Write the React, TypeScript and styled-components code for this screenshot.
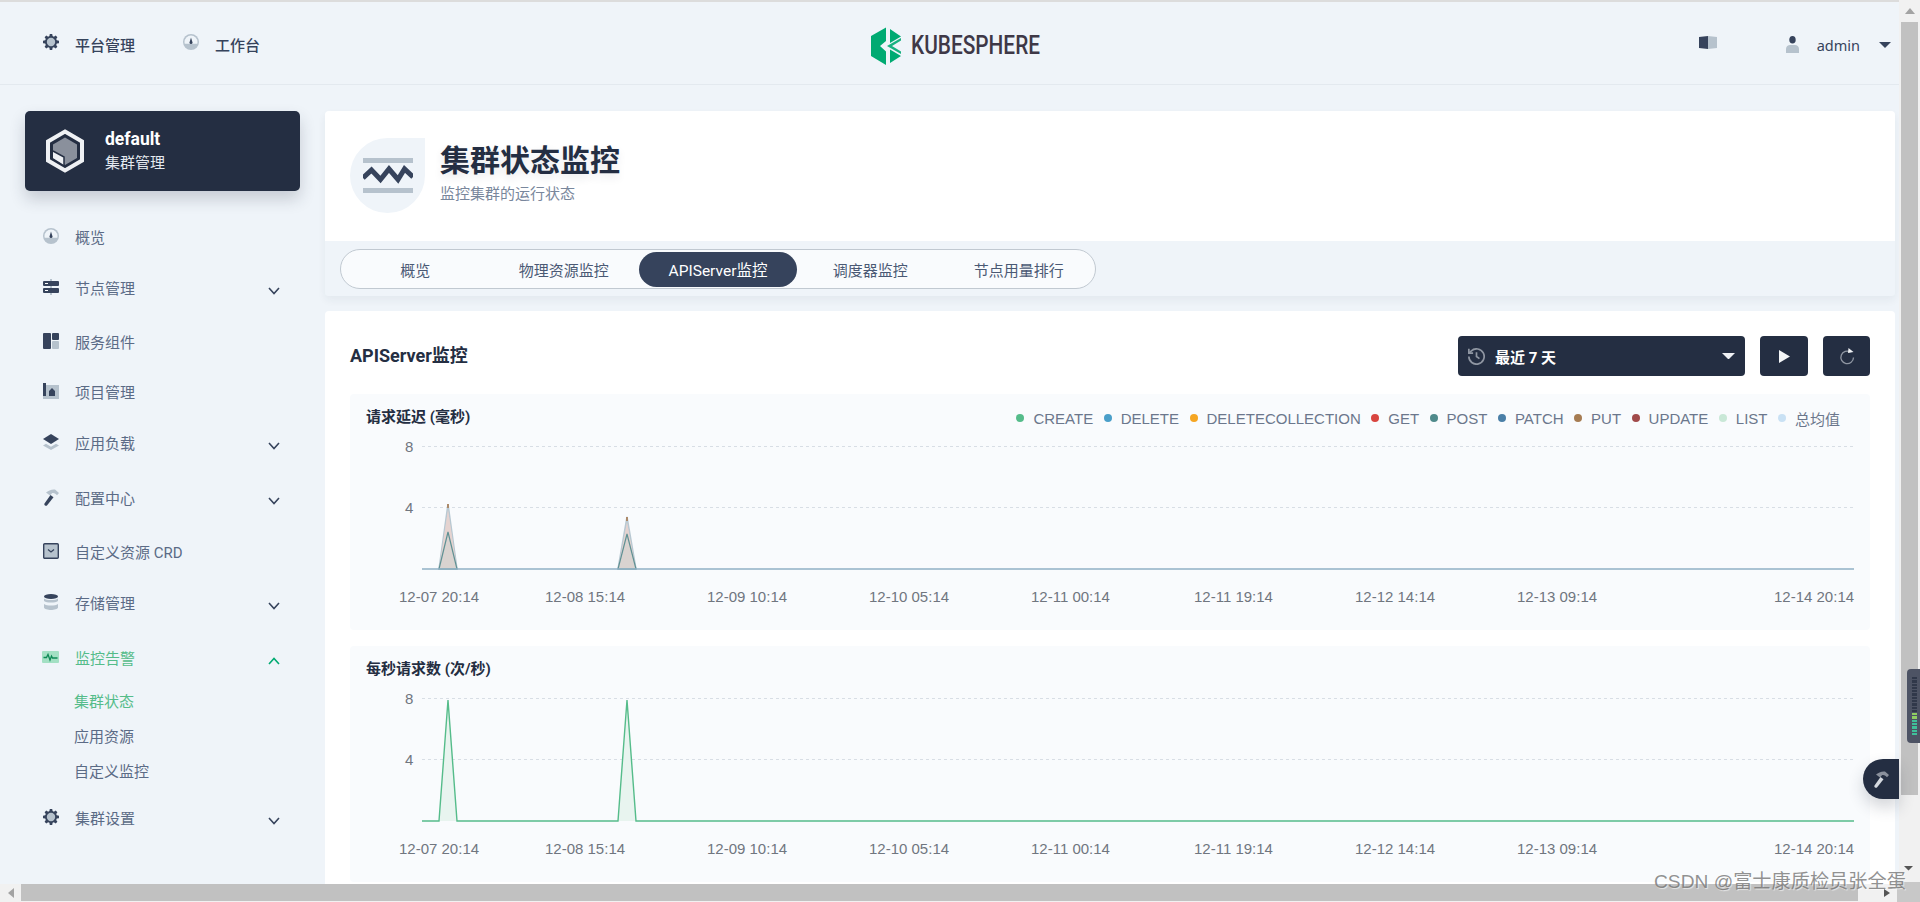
import React from "react";
import styled, { createGlobalStyle } from "styled-components";

const Global = createGlobalStyle`
  html, body { margin: 0; padding: 0; height: 100%; overflow: hidden; background: #eff4f9; }
  body { font-family: Roboto, "Noto Sans CJK SC", "Liberation Sans", sans-serif; color: #36435c; }
  * { box-sizing: border-box; }
`;

const Viewport = styled.div`
  width: 1920px;
  height: 902px;
  display: grid;
  grid-template-columns: 1899px 21px;
  grid-template-rows: 884px 18px;
  overflow: hidden;
  position: relative;
  background: #eff4f9;
`;
const Page = styled.div`
  grid-column: 1;
  grid-row: 1;
  overflow: hidden;
  border-top: 2px solid #dcdcdc;
  display: flex;
  flex-direction: column;
`;
const TopBar = styled.header`
  height: 83px;
  flex: none;
  display: flex;
  align-items: center;
  position: relative;
  border-bottom: 1px solid #e3e9ef;
  padding: 3px 8px 0 43px;
`;
const TopLink = styled.div`
  display: flex;
  align-items: center;
  gap: 16px;
  margin-right: 48px;
  font-size: 15px;
  font-weight: 500;
  color: #36435c;
  & svg { position: relative; top: -3px; }
`;
const LogoBox = styled.div`
  position: absolute;
  left: 871px;
  top: 25px;
  line-height: 0;
`;
const TopRight = styled.div`
  margin-left: auto;
  display: flex;
  align-items: center;
`;
const BookSlot = styled.span`
  margin-right: 69px;
  line-height: 0;
  position: relative;
  top: -2px;
`;
const UserName = styled.span`
  font-size: 14.5px;
  color: #36435c;
  margin: 0 19px 0 18px;
  font-family: "Noto Sans", Roboto, sans-serif;
`;
const Body = styled.div`
  flex: 1;
  display: flex;
  min-height: 0;
`;
const Sidebar = styled.aside`
  width: 325px;
  flex: none;
  padding: 26px 25px 0 25px;
`;
const ClusterCard = styled.div`
  height: 80px;
  background: #242e42;
  border-radius: 5px;
  box-shadow: 0 8px 16px rgba(36, 46, 66, 0.2);
  display: flex;
  align-items: center;
  padding-left: 20px;
  gap: 20px;
  margin-bottom: 23px;
  color: #fff;
`;
const ClusterName = styled.div`
  font-size: 17.5px;
  font-weight: 700;
  line-height: 23px;
`;
const ClusterSub = styled.div`
  font-size: 15px;
  line-height: 24px;
  color: #e3e9ef;
`;
const NavItem = styled.div<{ $gap: number; $active?: boolean }>`
  height: 44px;
  margin-top: ${(p) => p.$gap}px;
  display: flex;
  align-items: center;
  padding-left: 18px;
  padding-right: 20px;
  font-size: 15px;
  color: ${(p) => (p.$active ? "#55bc8a" : "#5b6b86")};
  & > svg:first-child { margin-right: 16px; flex: none; }
  & > svg.chev { margin-left: auto; position: relative; top: 4px; }
`;
const SubItem = styled.div<{ $active?: boolean; $gap?: number }>`
  height: 35px;
  margin-top: ${(p) => p.$gap ?? 0}px;
  display: flex;
  align-items: center;
  padding-left: 49px;
  font-size: 15px;
  color: ${(p) => (p.$active ? "#55bc8a" : "#5b6b86")};
`;
const Main = styled.main`
  width: 1570px;
  flex: none;
  padding-top: 26px;
`;
const Banner = styled.section`
  height: 185px;
  border-radius: 4px;
  overflow: hidden;
  box-shadow: 0 4px 8px rgba(36, 46, 66, 0.06);
  margin-bottom: 15px;
`;
const BannerTop = styled.div`
  height: 130px;
  background: #fff;
  display: flex;
  align-items: flex-start;
  padding: 27px 0 0 25px;
  gap: 15px;
`;
const BannerIcon = styled.div`
  width: 75px;
  height: 75px;
  background: #eff4f9;
  border-radius: 50% 0 50% 50%;
  display: flex;
  align-items: center;
  justify-content: center;
`;
const BannerTitle = styled.h1`
  margin: 2px 0 0;
  font-size: 30px;
  line-height: 42px;
  font-weight: 700;
  color: #242e42;
  text-shadow: 0 4px 8px rgba(36, 46, 66, 0.1);
`;
const BannerSub = styled.div`
  font-size: 15px;
  line-height: 20px;
  margin-top: 2px;
  color: #79879c;
`;
const TabStrip = styled.div`
  height: 55px;
  background: #eff4f9;
  padding-top: 8px;
  padding-left: 15px;
`;
const TabPill = styled.div`
  width: 756px;
  height: 40px;
  border: 1px solid #c1c9d1;
  border-radius: 20px;
  background: #f9fbfd;
  display: flex;
  align-items: center;
  padding-left: 1px;
`;
const Tab = styled.div<{ $active?: boolean }>`
  width: ${(p) => (p.$active ? 158 : 148.5)}px;
  height: 35px;
  border-radius: 18px;
  display: flex;
  align-items: center;
  justify-content: center;
  padding-right: ${(p) => (p.$active ? 0 : 2)}px;
  font-size: ${(p) => (p.$active ? 15.5 : 15)}px;
  color: ${(p) => (p.$active ? "#fff" : "#4a5974")};
  background: ${(p) => (p.$active ? "#36435c" : "transparent")};
`;
const Card = styled.section`
  background: #fff;
  border-radius: 4px;
  padding: 25px 25px 0;
  height: 580px;
`;
const CardHead = styled.div`
  display: flex;
  align-items: center;
  height: 40px;
  margin-bottom: 18px;
`;
const CardTitle = styled.h2`
  margin: 0;
  padding-bottom: 4px;
  font-size: 18px;
  font-weight: 700;
  color: #242e42;
  flex: 1;
`;
const DarkSelect = styled.div`
  width: 287px;
  height: 40px;
  background: #242e42;
  border-radius: 4px;
  display: flex;
  align-items: center;
  padding: 0 10px 0 10px;
  color: #fff;
  font-size: 15px;
  font-weight: 700;
  gap: 10px;
  & > svg:last-child { margin-left: auto; }
`;
const DarkButton = styled.div<{ $w: number }>`
  width: ${(p) => p.$w}px;
  height: 40px;
  background: #242e42;
  border-radius: 4px;
  margin-left: 15px;
  display: flex;
  align-items: center;
  justify-content: center;
`;
const Panel = styled.div`
  background: #f9fbfd;
  border-radius: 4px;
  margin-bottom: 16px;
  height: 236px;
`;
const PanelHead = styled.div`
  height: 40px;
  display: flex;
  align-items: center;
  padding: 0 30px 0 16px;
`;
const PanelTitle = styled.div`
  font-size: 15px;
  font-weight: 700;
  color: #242e42;
  flex: 1;
  padding-top: 2px;
`;
const Legend = styled.div`
  display: flex;
  align-items: center;
  gap: 10.5px;
  position: relative;
  top: 4px;
  font-family: "Liberation Sans", "Noto Sans CJK SC", sans-serif;
  font-size: 15px;
  color: #6b778c;
`;
const LegendItem = styled.span<{ $c: string }>`
  display: flex;
  align-items: center;
  gap: 9px;
  &::before {
    content: "";
    width: 8px;
    height: 8px;
    border-radius: 50%;
    background: ${(p) => p.$c};
  }
`;
const ChartSvg = styled.svg`
  display: block;
  & text {
    font-family: "Liberation Sans", sans-serif;
    font-size: 15px;
    fill: #70767f;
  }
`;
const HScrollBar = styled.div`
  grid-column: 1;
  grid-row: 2;
  background: #f1f1f1;
  display: flex;
  align-items: center;
`;
const HArrow = styled.div`
  width: 21px;
  height: 18px;
  display: flex;
  align-items: center;
  justify-content: center;
`;
const HThumb = styled.div`
  width: 1837px;
  height: 17px;
  margin-bottom: 1px;
  background: #c1c1c1;
`;
const VScrollBar = styled.div`
  grid-column: 2;
  grid-row: 1 / span 2;
  background: #f1f1f1;
  display: flex;
  flex-direction: column;
  padding-left: 2px;
`;
const VArrow = styled.div`
  width: 17px;
  height: 22px;
  display: flex;
  align-items: center;
  justify-content: center;
  flex: none;
`;
const VThumb = styled.div`
  width: 17px;
  height: 773px;
  flex: none;
  background: #c1c1c1;
`;
const VCorner = styled.div`
  margin: auto 0 0 -4px;
  width: 23px;
  height: 20px;
  background: #c8c8c8;
`;
const FloatTool = styled.div`
  position: absolute;
  left: 1863px;
  top: 759px;
  width: 36px;
  height: 40px;
  background: #242e42;
  border-radius: 20px 0 0 20px;
  box-shadow: 0 8px 16px rgba(36, 46, 66, 0.2);
  display: flex;
  align-items: center;
  justify-content: center;
`;
const Meter = styled.div`
  position: absolute;
  left: 1907px;
  top: 669px;
  width: 13px;
  height: 74px;
  background: #4d5364;
  border-radius: 4px 0 0 4px;
  padding: 8px 3px 8px 5px;
  display: flex;
  flex-direction: column;
  gap: 1px;
`;
const MeterBar = styled.i<{ $c: string }>`
  display: block;
  flex: 1;
  background: ${(p) => p.$c};
`;
const Watermark = styled.div`
  position: absolute;
  left: 1654px;
  top: 868px;
  white-space: nowrap;
  font-family: "Liberation Sans", "Noto Sans CJK SC", sans-serif;
  font-size: 19.2px;
  line-height: 28px;
  color: rgba(110, 110, 110, 0.75);
  text-shadow: 1px 1px 1px rgba(255, 255, 255, 0.6);
`;
const CornerMark = styled.svg`
  position: absolute;
  left: 1884px;
  top: 866px;
`;
const PulseSvg = styled.svg`
  margin-left: -1px;
`;

const D = "#36435c";
const L = "#b6c2cd";

const Gear = () => (
  <svg width="16" height="16" viewBox="0 0 16 16">
    <path fill={D} d="M6.8 0h2.4l.4 2.1 1.3.6 1.8-1.2 1.7 1.7-1.2 1.8.6 1.3 2.2.5v2.4l-2.2.4-.6 1.3 1.2 1.8-1.7 1.7-1.8-1.2-1.3.6-.4 2.1H6.8l-.4-2.1-1.3-.6-1.8 1.2-1.7-1.7 1.2-1.8-.6-1.3L0 9.2V6.8l2.2-.5.6-1.3L1.6 3.2l1.7-1.7 1.8 1.2 1.3-.6z" />
    <circle cx="8" cy="8" r="4.2" fill={L} />
  </svg>
);
const Dial = () => (
  <svg width="16" height="16" viewBox="0 0 16 16">
    <circle cx="8" cy="8" r="8" fill={L} />
    <path fill="#eff4f9" d="M1.5 8a6.5 6.5 0 0 1 13 0c0 .7-.1 1.2-.3 1.7H1.8C1.6 9.200 1.500 8.700 1.500 8z" />
    <path fill={D} d="M8 3.500l1.500 5a1.500 1.500 0 1 1-3 0z" />
  </svg>
);
const Book = () => (
  <svg width="18" height="13" viewBox="0 0 18 13">
    <path fill={D} d="M0 1l9-1v13l-9-1z" />
    <path fill={L} d="M9 0l9 1v11l-9 1z" />
  </svg>
);
const User = () => (
  <svg width="13" height="17" viewBox="0 0 13 17">
    <ellipse cx="6.500" cy="3.800" rx="3.200" ry="3.800" fill={D} />
    <path fill={L} d="M0 17v-4c0-2.500 2-4 4-4h5c2 0 4 1.500 4 4v4z" />
  </svg>
);
const Caret = ({ c = D, w = 12 }: { c?: string; w?: number }) => (
  <svg width={w} height={w / 2} viewBox="0 0 12 6">
    <path fill={c} d="M0 0h12L6 6z" />
  </svg>
);
const Chevron = ({ up, c = D }: { up?: boolean; c?: string }) => (
  <svg className="chev" width="12" height="8" viewBox="0 0 12 8">
    <path fill="none" stroke={c} strokeWidth="1.600" d={up ? "M1 7l5-5.500L11 7" : "M1 1l5 5.500L11 1"} />
  </svg>
);
const Server = () => (
  <svg width="16" height="16" viewBox="0 0 16 16">
    <path fill={L} d="M7 0h2v16H7z" />
    <rect y="2" width="16" height="5" rx="1" fill={D} />
    <rect y="9" width="16" height="5" rx="1" fill={D} />
    <path fill="#fff" d="M2 4h3v1H2zM2 11h3v1H2z" />
  </svg>
);
const Blocks = () => (
  <svg width="16" height="16" viewBox="0 0 16 16">
    <rect width="8" height="16" rx="1" fill={D} />
    <rect x="9" width="7" height="7" rx="1" fill={D} />
    <rect x="9" y="8" width="7" height="8" rx="1" fill={L} />
  </svg>
);
const Project = () => (
  <svg width="16" height="16" viewBox="0 0 16 16">
    <rect y="2" width="16" height="14" fill={L} />
    <path fill={D} d="M0 0h3v13H0zM6 13V8l3-3 3 3v5z" />
  </svg>
);
const Layers = () => (
  <svg width="16" height="16" viewBox="0 0 16 16">
    <path fill={L} d="M8 16L0 11.500l3-1.700 5 3 5-3 3 1.700z" />
    <path fill={D} d="M8 0l8 5-8 5-8-5z" />
  </svg>
);
const Hammer = ({ a = D, b = L }: { a?: string; b?: string }) => (
  <svg width="16" height="17" viewBox="0 0 16 17">
    <path fill={b} d="M3 3.500C5 1.500 9 0 12 .5L16 4l-2 2.200C12 4.200 10.500 3.600 9 4.200L7 6.500z" />
    <path fill={a} d="M7.500 6l3 2.300-6.300 8c-.6.600-1.500.700-2.200.2-.7-.5-.9-1.300-.5-2z" />
  </svg>
);
const CrdBox = () => (
  <svg width="16" height="16" viewBox="0 0 16 16">
    <rect x=".7" y=".7" width="14.600" height="14.600" rx="1" fill={L} stroke={D} strokeWidth="1.400" />
    <path fill="none" stroke={D} strokeWidth="1.300" d="M5 6.500l3 2.500 3-2.500" />
  </svg>
);
const Disk = () => (
  <svg width="16" height="16" viewBox="-1 0 16 16">
    <ellipse cx="7" cy="2.500" rx="7" ry="2.500" fill={D} />
    <path fill={L} d="M0 4.500c1.500 1.200 4 1.500 7 1.500s5.500-.3 7-1.500V7c-1.500 1.200-4 1.600-7 1.600S1.500 8.200 0 7zM0 10c1.500 1.200 4 1.500 7 1.500s5.500-.3 7-1.500v3.500C14 15 10 16 7 16s-7-1-7-2.500z" />
  </svg>
);
const Pulse = () => (
  <PulseSvg width="17" height="12" viewBox="0 0 17 12">
    <rect width="17" height="12" rx="1" fill="#a3e0c4" />
    <path fill="none" stroke="#0f8a57" strokeWidth="1.300" d="M1.500 6.500h3l1.500-3 2 5.500 1.500-4 1 2h5" />
  </PulseSvg>
);
const HexCube = () => (
  <svg width="40" height="44" viewBox="0 0 40 44">
    <path fill="none" stroke="#eff1f4" strokeWidth="4" d="M20 2.500l17 10v19l-17 10-17-10v-19z" />
    <path fill="#8a909c" d="M20 8.500l12 7v13.500l-12 7-12-7V15.500z" />
    <path fill="#eff1f4" d="M8 22l11 6v8l-11-7z" />
    <path fill="none" stroke="#242e42" strokeWidth="1.500" d="M8 22l11 6v8" />
  </svg>
);
const Logo = () => (
  <svg width="210" height="38" viewBox="0 0 210 38">
    <path fill="#00aa72" d="M15 .5v13.500l-6 5 6 5.500v13.500L0 29V9z" />
    <path fill="#00aa72" d="M19 2l11 7.500-11 6.500zM19 22.500l11 6.500-11 7z" />
    <path fill="#00aa72" d="M16 19l14-8v2.500L21 19l9 5.500v2.500z" opacity=".9" />
    <text x="40" y="27" textLength="129" lengthAdjust="spacingAndGlyphs" fontFamily="Roboto, sans-serif" fontSize="25" fontWeight="500" fill="#3e3847">KUBESPHERE</text>
  </svg>
);
const Zigzag = () => (
  <svg width="50" height="35" viewBox="0 0 50 35">
    <rect width="50" height="5" fill={L} />
    <rect y="30" width="50" height="5" fill={L} />
    <path fill="none" stroke={D} strokeWidth="5" d="M0 20l8.500-8 9 9.500L26 11l9 10.500L41.500 11l8.500 8" />
  </svg>
);
const ClockBack = () => (
  <svg width="17" height="17" viewBox="2 2 20 20" fill="none" stroke="#8f96a2" strokeWidth="2">
    <path d="M3 12a9 9 0 1 0 3-6.700L3 8" />
    <path d="M3 3v5h5" />
    <path d="M12 7v5l3.500 2.500" />
  </svg>
);
const PlayIcon = () => (
  <svg width="11" height="13" viewBox="0 0 11 13"><path fill="#f4f6f8" d="M0 0l11 6.500L0 13z" /></svg>
);
const Refresh = () => (
  <svg width="16" height="17" viewBox="0 0 16 17">
    <path fill="none" stroke="#8f96a2" strokeWidth="1.300" d="M11.500 4A6.300 6.300 0 1 0 14.500 9.500" />
    <path fill="#eff1f4" d="M9.500 0l5 4-5.500 1z" />
  </svg>
);

const labels: [number, string][] = [
  [49, "12-07 20:14"], [195, "12-08 15:14"], [357, "12-09 10:14"], [519, "12-10 05:14"], [681, "12-11 00:14"],
  [844, "12-11 19:14"], [1005, "12-12 14:14"], [1167, "12-13 09:14"], [1424, "12-14 20:14"],
];

const Axis = () => (
  <>
    <line x1="72" x2="1504" y1="6.500" y2="6.500" stroke="#d8dee5" strokeDasharray="3 3" />
    <line x1="72" x2="1504" y1="67.500" y2="67.500" stroke="#d8dee5" strokeDasharray="3 3" />
    <text x="55" y="11.500">8</text>
    <text x="55" y="72.500">4</text>
    {labels.map(([x, t]) => (
      <text key={t} x={x} y="162">{t}</text>
    ))}
  </>
);

const spike = (c: number, top: number) => `${c - 9},129 ${c},${top} ${c + 9},129`;

const LatencyChart = () => (
  <ChartSvg width="1520" height="196" viewBox="0 -6 1520 196">
    <Axis />
    {[[98, 64], [277, 77]].map(([c, top]) => (
      <g key={c}>
        <polygon points={spike(c, top)} fill="#d9d3d0" stroke="#b8c8d2" strokeWidth="1.500" />
        <polygon points={spike(c, top + 6)} fill="#e5d3d0" />
        <polygon points={spike(c, top === 64 ? 92 : 94)} fill="#d9d3d0" stroke="#5f9194" strokeWidth="1.200" />
        <line x1={c} x2={c} y1={top} y2={top + 4} stroke="#a87a50" strokeWidth="1.600" />
      </g>
    ))}
    <line x1="72" x2="1504" y1="129" y2="129" stroke="#8fb0c4" strokeWidth="1.500" />
  </ChartSvg>
);

const RateChart = () => (
  <ChartSvg width="1520" height="196" viewBox="0 -6 1520 196">
    <Axis />
    <polygon points={spike(98, 8)} fill="#e8f4ef" />
    <polygon points={spike(277, 8)} fill="#e8f4ef" />
    <polyline
      points="72,129 89,129 98,8 107,129 268,129 277,8 286,129 1504,129"
      fill="none"
      stroke="#55bc8a"
      strokeWidth="1.400"
    />
  </ChartSvg>
);

const legend: [string, string][] = [
  ["CREATE", "#55bc8a"], ["DELETE", "#4a9fc9"], ["DELETECOLLECTION", "#f5a623"], ["GET", "#d8453f"],
  ["POST", "#4f8a8b"], ["PATCH", "#4a7fa7"], ["PUT", "#a67c52"], ["UPDATE", "#a14a4a"],
  ["LIST", "#c9e8d7"], ["总均值", "#c9e1f4"],
];

export default function App() {
  return (
    <Viewport>
      <Global />
      <Page>
        <TopBar>
          <TopLink><Gear />平台管理</TopLink>
          <TopLink><Dial />工作台</TopLink>
          <LogoBox><Logo /></LogoBox>
          <TopRight>
            <BookSlot><Book /></BookSlot>
            <User />
            <UserName>admin</UserName>
            <Caret />
          </TopRight>
        </TopBar>
        <Body>
          <Sidebar>
            <ClusterCard>
              <HexCube />
              <div>
                <ClusterName>default</ClusterName>
                <ClusterSub>集群管理</ClusterSub>
              </div>
            </ClusterCard>
            <NavItem $gap={0}><Dial />概览</NavItem>
            <NavItem $gap={7}><Server />节点管理<Chevron /></NavItem>
            <NavItem $gap={10}><Blocks />服务组件</NavItem>
            <NavItem $gap={6}><Project />项目管理</NavItem>
            <NavItem $gap={7}><Layers />应用负载<Chevron /></NavItem>
            <NavItem $gap={11}><Hammer />配置中心<Chevron /></NavItem>
            <NavItem $gap={10}><CrdBox />自定义资源 CRD</NavItem>
            <NavItem $gap={7}><Disk />存储管理<Chevron /></NavItem>
            <NavItem $gap={11} $active><Pulse />监控告警<Chevron up c="#00aa72" /></NavItem>
            <SubItem $gap={4} $active>集群状态</SubItem>
            <SubItem>应用资源</SubItem>
            <SubItem>自定义监控</SubItem>
            <NavItem $gap={7}><Gear />集群设置<Chevron /></NavItem>
          </Sidebar>
          <Main>
            <Banner>
              <BannerTop>
                <BannerIcon><Zigzag /></BannerIcon>
                <div>
                  <BannerTitle>集群状态监控</BannerTitle>
                  <BannerSub>监控集群的运行状态</BannerSub>
                </div>
              </BannerTop>
              <TabStrip>
                <TabPill>
                  <Tab>概览</Tab>
                  <Tab>物理资源监控</Tab>
                  <Tab $active>APIServer监控</Tab>
                  <Tab>调度器监控</Tab>
                  <Tab>节点用量排行</Tab>
                </TabPill>
              </TabStrip>
            </Banner>
            <Card>
              <CardHead>
                <CardTitle>APIServer监控</CardTitle>
                <DarkSelect><ClockBack />最近 7 天<Caret c="#eff1f4" w={13} /></DarkSelect>
                <DarkButton $w={48}><PlayIcon /></DarkButton>
                <DarkButton $w={47}><Refresh /></DarkButton>
              </CardHead>
              <Panel>
                <PanelHead>
                  <PanelTitle>请求延迟 (毫秒)</PanelTitle>
                  <Legend>
                    {legend.map(([t, c]) => (
                      <LegendItem key={t} $c={c}>{t}</LegendItem>
                    ))}
                  </Legend>
                </PanelHead>
                <LatencyChart />
              </Panel>
              <Panel>
                <PanelHead>
                  <PanelTitle>每秒请求数 (次/秒)</PanelTitle>
                </PanelHead>
                <RateChart />
              </Panel>
            </Card>
          </Main>
        </Body>
      </Page>
      <HScrollBar>
        <HArrow>
          <svg width="6" height="10" viewBox="0 0 6 10"><path fill="#a3a3a3" d="M6 0v10L0 5z" /></svg>
        </HArrow>
        <HThumb />
      </HScrollBar>
      <VScrollBar>
        <VArrow>
          <svg width="10" height="6" viewBox="0 0 10 6"><path fill="#a3a3a3" d="M0 6h10L5 0z" /></svg>
        </VArrow>
        <VThumb />
        <VCorner />
      </VScrollBar>
      <Meter>
        {Array.from({ length: 18 }, (_, i) => (
          <MeterBar key={i} $c={i < 11 ? "#30384a" : i < 13 ? "#8fcf62" : "#3fc09a"} />
        ))}
      </Meter>
      <FloatTool><Hammer a="#d6dae0" b="#8a909c" /></FloatTool>
      <Watermark>CSDN @富士康质检员张全蛋</Watermark>
      <CornerMark width="36" height="32" viewBox="0 0 36 32">
        <path fill="#555" d="M20 0h9l-4.500 4.500zM0 23v8l6-4z" />
      </CornerMark>
    </Viewport>
  );
}
